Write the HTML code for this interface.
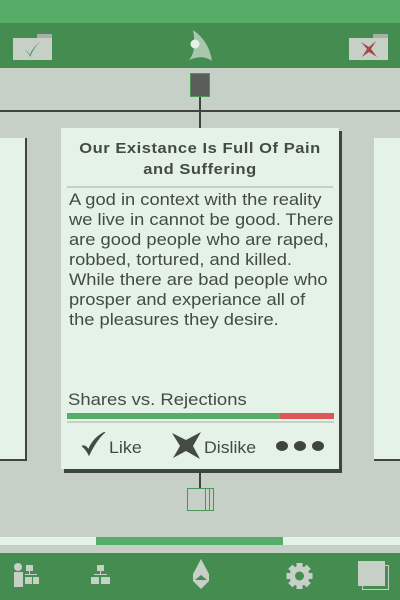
<!DOCTYPE html>
<html><head><meta charset="utf-8"><style>
*{margin:0;padding:0;box-sizing:border-box}
body{width:400px;height:600px;overflow:hidden;background:#c7d0c7;position:relative;font-family:"Liberation Sans",sans-serif;color:#444a44}
.a{position:absolute}
.s{transform-origin:0 0;white-space:nowrap}
</style></head><body>
<div class="a" style="left:0;top:0;width:400px;height:23px;background:#57ad67"></div>
<div class="a" style="left:0;top:23px;width:400px;height:45px;background:#458c50"></div>
<div class="a" style="left:37px;top:34px;width:15px;height:4px;background:#a9aea9"></div>
<div class="a" style="left:13px;top:38px;width:39px;height:22px;background:#c7d0c7"></div>
<svg class="a" style="left:24px;top:40px" width="18" height="18" viewBox="0 0 18 18"><path d="M1 10 Q4 11 5.5 15 Q9 7 17 1 Q10 7 6 17 Q4 12 1 10 Z" fill="#4a9656"/></svg>
<div class="a" style="left:373px;top:34px;width:15px;height:4px;background:#a9aea9"></div>
<div class="a" style="left:349px;top:38px;width:39px;height:22px;background:#c7d0c7"></div>
<svg class="a" style="left:360px;top:40px" width="18" height="18" viewBox="0 0 18 18"><path d="M1 2 L9 7 L16 1 L11 9 L17 17 L9 12 L2 17 L7 9 Z" fill="#a34747"/></svg>
<svg class="a" style="left:187px;top:29px" width="28" height="33" viewBox="0 0 28 33"><path d="M6 1 Q22 12 25 32 Q16 25 2 31 Q10 22 6 1 Z" fill="#a9c7ad"/><circle cx="8" cy="15" r="4.5" fill="#e4f2e8"/></svg>
<div class="a" style="left:190px;top:73px;width:20px;height:24px;background:#5a5e5a;border:1px solid #4a9656"></div>
<div class="a" style="left:199px;top:97px;width:2px;height:31px;background:#3f443f"></div>
<div class="a" style="left:0;top:110px;width:400px;height:2px;background:#3f443f"></div>
<div class="a" style="left:0;top:138px;width:27px;height:323px;background:#3f443f"></div>
<div class="a" style="left:0;top:138px;width:25px;height:321px;background:#e4f2e8"></div>
<div class="a" style="left:374px;top:138px;width:26px;height:323px;background:#3f443f"></div>
<div class="a" style="left:374px;top:138px;width:26px;height:321px;background:#e4f2e8"></div>
<div class="a" style="left:64px;top:131px;width:278px;height:342px;background:#3f443f"></div>
<div class="a" style="left:61px;top:128px;width:278px;height:341px;background:#e4f2e8"></div>
<div class="a" style="left:61px;top:138px;width:278px;text-align:center;font-weight:bold;font-size:15px;line-height:21px;letter-spacing:0.5px;transform:scaleX(1.1);transform-origin:139px 0">Our Existance Is Full Of Pain<br>and Suffering</div>
<div class="a" style="left:67px;top:186px;width:266px;height:2px;background:#c7d0c7"></div>
<div class="a s" style="left:69px;top:190px;font-size:16.5px;line-height:20px;transform:scaleX(1.11)">A god in context with the reality<br>we live in cannot be good. There<br>are good people who are raped,<br>robbed, tortured, and killed.<br>While there are bad people who<br>prosper and experiance all of<br>the pleasures they desire.</div>
<div class="a s" style="left:68px;top:390px;font-size:16.5px;line-height:20px;transform:scaleX(1.12)">Shares vs. Rejections</div>
<div class="a" style="left:67px;top:413px;width:213px;height:6px;background:#57ad67"></div>
<div class="a" style="left:280px;top:413px;width:54px;height:6px;background:#dc5858"></div>
<div class="a" style="left:67px;top:421px;width:267px;height:2px;background:#c7d0c7"></div>
<svg class="a" style="left:82px;top:432px" width="24" height="24" viewBox="0 0 24 24"><path d="M0 14 Q4 13 6.5 18 Q11 6 23 0 Q14 8 7 23 Q4 17 0 14 Z" fill="#444a44" stroke="#444a44" stroke-width="1"/></svg>
<div class="a s" style="left:109px;top:438px;font-size:17px;line-height:20px;transform:scaleX(1.05)">Like</div>
<svg class="a" style="left:172px;top:432px" width="30" height="28" viewBox="0 0 30 28"><path d="M0 1 L14 8 L29 0 L21 14 L28 27 L14 19 L1 26 L8 14 Z" fill="#444a44"/></svg>
<div class="a s" style="left:204px;top:438px;font-size:17px;line-height:20px;transform:scaleX(1.04)">Dislike</div>
<div class="a" style="left:276px;top:441px;width:12px;height:10px;border-radius:50%;background:#3f443f"></div>
<div class="a" style="left:294px;top:441px;width:12px;height:10px;border-radius:50%;background:#3f443f"></div>
<div class="a" style="left:312px;top:441px;width:12px;height:10px;border-radius:50%;background:#3f443f"></div>
<div class="a" style="left:199px;top:472px;width:2px;height:16px;background:#3f443f"></div>
<div class="a" style="left:187px;top:488px;width:27px;height:23px;border:1px solid #4a9656"></div>
<div class="a" style="left:205px;top:488px;width:1px;height:23px;background:#4a9656"></div>
<div class="a" style="left:209px;top:488px;width:1px;height:23px;background:#4a9656"></div>
<div class="a" style="left:0;top:537px;width:400px;height:8px;background:#e4f2e8"></div>
<div class="a" style="left:96px;top:537px;width:187px;height:8px;background:#57ad67"></div>
<div class="a" style="left:0;top:553px;width:400px;height:47px;background:#458c50"></div>
<svg class="a" style="left:13px;top:563px" width="27" height="25" viewBox="0 0 27 25"><circle cx="5" cy="4" r="4" fill="#c7d0c7"/><rect x="1" y="9" width="9" height="15" fill="#c7d0c7"/><rect x="13" y="2" width="7" height="6" fill="#c7d0c7"/><rect x="16" y="8" width="1" height="3" fill="#c7d0c7"/><rect x="12" y="11" width="12" height="1" fill="#c7d0c7"/><rect x="12" y="14" width="7" height="7" fill="#c7d0c7"/><rect x="20" y="14" width="6" height="7" fill="#c7d0c7"/></svg>
<svg class="a" style="left:91px;top:565px" width="19" height="20" viewBox="0 0 19 20"><rect x="6" y="0" width="7" height="6" fill="#c7d0c7"/><rect x="9" y="6" width="1" height="3" fill="#c7d0c7"/><rect x="3" y="9" width="13" height="1" fill="#c7d0c7"/><rect x="0" y="12" width="8" height="7" fill="#c7d0c7"/><rect x="10" y="12" width="9" height="7" fill="#c7d0c7"/></svg>
<svg class="a" style="left:192px;top:559px" width="18" height="31" viewBox="0 0 18 31"><path d="M9 0 L17 15 L17 22 L9 30 L1 22 L1 15 Z" fill="#c7d0c7"/><path d="M9 16 L15 21 L3 21 Z" fill="#458c50"/></svg>
<svg class="a" style="left:285px;top:563px" width="29" height="26" viewBox="0 0 29 26"><g fill="#c7d0c7" transform="translate(14.5 13)"><circle r="10"/><rect x="-3" y="-13" width="6" height="26"/><rect x="-3" y="-13" width="6" height="26" transform="rotate(45)"/><rect x="-3" y="-13" width="6" height="26" transform="rotate(90)"/><rect x="-3" y="-13" width="6" height="26" transform="rotate(135)"/></g><circle cx="14.5" cy="13" r="4.5" fill="#458c50"/></svg>
<div class="a" style="left:362px;top:565px;width:27px;height:25px;border:1px solid #c7d0c7"></div>
<div class="a" style="left:358px;top:561px;width:27px;height:25px;background:#c7d0c7"></div>
</body></html>
